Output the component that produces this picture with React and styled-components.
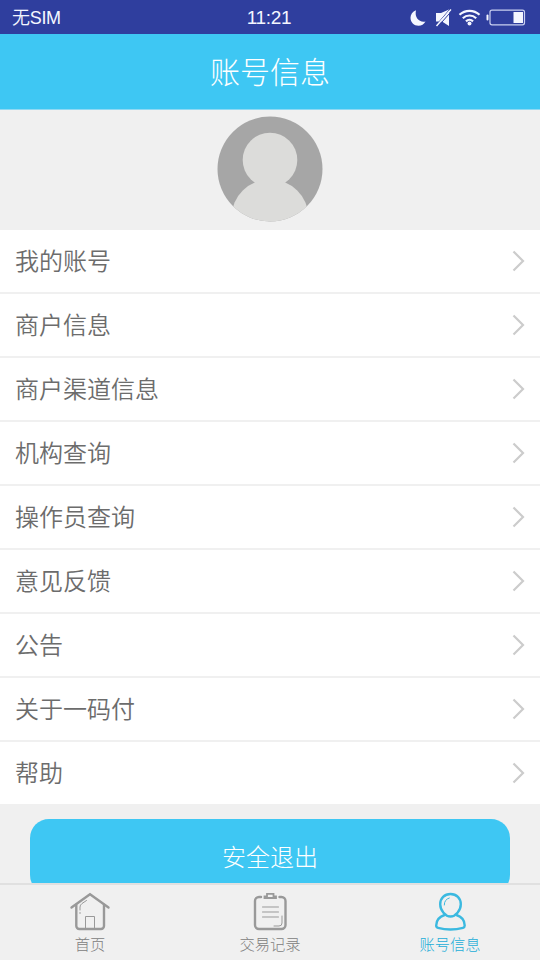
import React from 'react';
import styled, { createGlobalStyle } from 'styled-components';

const blue = '#3ec7f3';
const grey = '#f0f0f0';

const GlobalStyle = createGlobalStyle`
	* {
		box-sizing: border-box;
	}
	body {
		margin: 0;
		background: ${grey};
		font-family: "Noto Sans CJK SC", sans-serif;
		font-weight: 300;
	}
`;

// Whole screen
const Screen = styled.div`
	width: 540px;
	height: 960px;
	display: flex;
	flex-direction: column;
	overflow: hidden;
	background: ${grey};
`;

// System bar
const StatusBar = styled.div`
	flex: none;
	height: 34px;
	padding: 1px 14px 0 12px;
	display: grid;
	grid-template-columns: 1fr auto 1fr;
	align-items: center;
	background: #2f3e9e;
	color: #f4f6ff;
	font-family: "Liberation Sans", "Noto Sans CJK SC", sans-serif;
	font-weight: 350;
	line-height: 34px;
`;

const Carrier = styled.span`
	font-size: 18px;
	letter-spacing: -0.3px;
`;

const Clock = styled.span`
	font-size: 19px;
	letter-spacing: -0.3px;
`;

const StatusIcons = styled.svg`
	justify-self: end;
	width: 116px;
	height: 20px;
	display: block;
`;

// Page title
const Header = styled.header`
	flex: none;
	height: 76px;
	display: flex;
	align-items: center;
	justify-content: center;
	background: ${blue};
	border-bottom: 1px solid #8fd9f3;
	color: #fff;
	font-size: 30px;
	line-height: 44px;
	padding-bottom: 3px;
`;

const Content = styled.main`
	flex: 1;
	min-height: 0;
	overflow: hidden;
`;

const AvatarArea = styled.div`
	height: 120px;
	display: flex;
	align-items: center;
	justify-content: center;
	padding-bottom: 2px;
`;

const Avatar = styled.svg`
	width: 106px;
	height: 106px;
	display: block;
`;

const Menu = styled.div`
	background: #fff;
`;

const MenuRow = styled.div`
	height: 64px;
	padding: 0 15px 2px;
	display: flex;
	align-items: center;
	justify-content: space-between;
	border-bottom: 2px solid #f0f0f0;
	color: #6c6c6c;
	font-size: 24px;
	font-weight: 350;
	line-height: 34px;

	&:last-child {
		height: 62px;
		border-bottom: none;
	}
`;

const Chevron = styled.svg`
	width: 13px;
	height: 22px;
	margin-top: 1px;
	fill: none;
	stroke: #ccc;
	stroke-width: 2.2;
`;

const LogoutButton = styled.button`
	display: block;
	width: 480px;
	height: 75px;
	margin: 15px auto 0;
	padding: 0 0 1px;
	border: none;
	border-radius: 19px;
	background: ${blue};
	color: #fff;
	font-family: inherit;
	font-weight: 300;
	font-size: 24px;
	line-height: 36px;
`;

// Bottom tabs
const TabBar = styled.nav`
	flex: none;
	height: 77px;
	display: flex;
	border-top: 2px solid #e0e0e0;
	background: ${grey};
`;

const Tab = styled.div`
	flex: 1;
	display: flex;
	flex-direction: column;
	align-items: center;
	padding-top: 5px;
	color: ${props => (props.$active ? '#3bb9e0' : '#999')};
`;

const TabIcon = styled.svg`
	width: 42px;
	height: 42px;
	fill: none;
	stroke: currentColor;
	stroke-linecap: round;
	stroke-linejoin: round;
`;

const TabLabel = styled.span`
	font-size: 15.3px;
	line-height: 22px;
	color: ${props => (props.$active ? '#22add8' : '#808080')};
`;

const rows = [
	'我的账号',
	'商户信息',
	'商户渠道信息',
	'机构查询',
	'操作员查询',
	'意见反馈',
	'公告',
	'关于一码付',
	'帮助',
];

const HomeIcon = () => (
	<TabIcon viewBox="0 0 42 42">
		<path d="M2.5 17.5 21 4.300 39.500 17.5" strokeWidth="2.4" strokeLinejoin="miter" />
		<path d="M7.300 15V36a3 3 0 0 0 3 3H32a3 3 0 0 0 3-3V15" strokeWidth="2.4" />
		<path d="M16.500 38V26.500h9V38" strokeWidth="1" />
		<path d="M11 20v-3q0-2 2-3.500l4.500-3M11 22.500v1" strokeWidth="1" />
	</TabIcon>
);

const RecordIcon = () => (
	<TabIcon viewBox="0 0 42 42">
		<path d="M12 7H10a4 4 0 0 0-4 4V35a4 4 0 0 0 4 4H32.500a4 4 0 0 0 4-4V11a4 4 0 0 0-4-4H30.500" strokeWidth="2.4" />
		<path d="M15.500 8V6.500h2.500V3.800h6.500v2.700H27V8z" strokeWidth="1.800" strokeLinejoin="miter" />
		<path d="M13.500 17h16M13.500 22h16M13.500 27h16" strokeWidth="1" />
		<path d="M33 26v7q0 3-3 3h-5" strokeWidth="1" />
	</TabIcon>
);

const AccountIcon = () => (
	<TabIcon viewBox="0 0 42 42">
		<path d="M21.500 4c-6 0-10.300 4.300-10.300 10.200 0 6.300 5.300 12.300 10.300 12.300s10.300-6 10.300-12.300C31.800 8.300 27.500 4 21.500 4z" strokeWidth="2.400" />
		<path d="M15.500 25c-5 1.700-8.300 5.500-8.300 10.500 0 1.200.5 2 1.800 2.300 7.500 2 17.500 2 25 0 1.200-.3 1.700-1.100 1.700-2.300 0-5-3.200-8.800-8.200-10.500" strokeWidth="2.400" />
		<path d="M15.300 15c0-3.700 1.700-6 5-7" strokeWidth="1" />
	</TabIcon>
);

const tabs = [
	{ label: '首页', icon: HomeIcon },
	{ label: '交易记录', icon: RecordIcon },
	{ label: '账号信息', icon: AccountIcon, active: true },
];

const App = () => (
	<>
		<GlobalStyle />
		<Screen>
			<StatusBar>
				<Carrier>无SIM</Carrier>
				<Clock>11:21</Clock>
				<StatusIcons viewBox="410 7.500 116 20" fill="#f4f6ff">
					{/* moon */}
					<path d="M416 9.800C412.500 11.200 410.500 14 410.500 17.300 410.500 21.800 414 25.300 418.500 25.300 421.500 25.300 424 23.800 425.500 21 419.500 22.300 414.200 17.500 416 9.800z" />
					{/* muted speaker */}
					<path d="M436 12.500h5l8-3.500V25.500l-7-4.500H436z" />
					<path d="M435.500 25.500 450 8.500" stroke="#2f3e9e" strokeWidth="1" />
					<path d="M436.500 25.500 451 9" stroke="#f4f6ff" strokeWidth="1.500" />
					<path d="M438.500 25.500 452.500 9.500" stroke="#2f3e9e" strokeWidth="1" />
					{/* wifi */}
					<g fill="none" stroke="#f4f6ff" strokeWidth="2.200">
						<path d="M459.500 14.300a14.500 14.500 0 0 1 20 0" />
						<path d="M462.800 17.700a9.600 9.600 0 0 1 13.400 0" />
						<path d="M466 20.900a5 5 0 0 1 7 0" />
					</g>
					<circle cx="469.500" cy="23" r="2" />
					{/* battery */}
					<rect x="490" y="9.700" width="34.500" height="14.600" rx="2" fill="none" stroke="#c9cff0" strokeWidth="1.200" />
					<rect x="513.500" y="11.500" width="9.500" height="11" />
					<rect x="486.500" y="14" width="2" height="6" rx="1" />
				</StatusIcons>
			</StatusBar>
			<Header>账号信息</Header>
			<Content>
				<AvatarArea>
					<Avatar viewBox="217 116.500 106 106">
						<clipPath id="avatarClip">
							<circle cx="270" cy="169.500" r="52.500" />
						</clipPath>
						<g clipPath="url(#avatarClip)">
							<rect x="217" y="116" width="106" height="107" fill="#a6a6a6" />
							<circle cx="270" cy="160.500" r="27.300" fill="#dcdcda" />
							<ellipse cx="270" cy="217.500" rx="38.500" ry="37.500" fill="#dcdcda" />
						</g>
					</Avatar>
				</AvatarArea>
				<Menu>
					{rows.map(row => (
						<MenuRow key={row}>
							{row}
							<Chevron viewBox="0 0 13 22">
								<path d="M1.500 1.500 11 11 1.500 20.500" />
							</Chevron>
						</MenuRow>
					))}
				</Menu>
				<LogoutButton>安全退出</LogoutButton>
			</Content>
			<TabBar>
				{tabs.map(({ label, icon: Icon, active }) => (
					<Tab key={label} $active={active}>
						<Icon />
						<TabLabel $active={active}>{label}</TabLabel>
					</Tab>
				))}
			</TabBar>
		</Screen>
	</>
);

export default App;
